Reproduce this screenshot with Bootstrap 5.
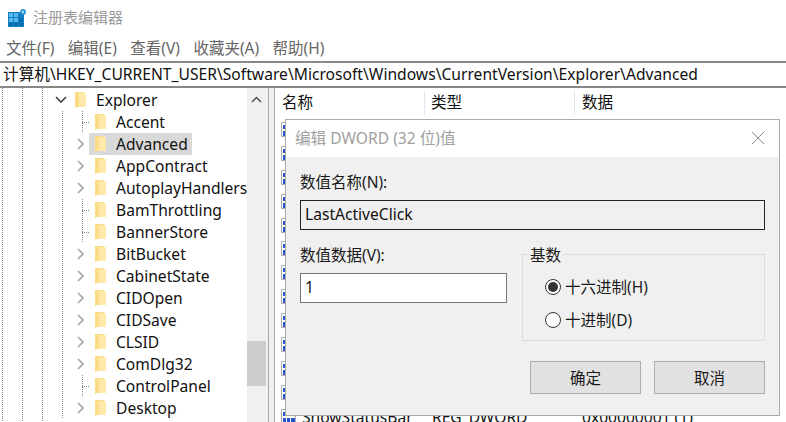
<!doctype html>
<html lang="zh-CN"><head><meta charset="utf-8"><title>注册表编辑器</title>
<link rel="stylesheet" href="https://cdn.jsdelivr.net/npm/bootstrap@5.3.0/dist/css/bootstrap.min.css">
<style>
html,body{height:100%;margin:0}
body{width:786px;height:422px;overflow:hidden;background:#fff;color:#111;font-family:"Noto Sans","Noto Sans CJK SC",sans-serif;font-size:15.6px;line-height:22px}
.shell{position:relative;width:786px;height:422px;overflow:hidden}
.titlebar{height:36px;padding:6px 0 0 8px;color:#999;font-size:15px;gap:6px}
.titlebar svg{margin-top:3px}
.menubar{height:25px;padding-left:6px;gap:13.5px;color:#666;font-size:15.5px;line-height:24px}
.addr{height:27px;border-top:2px solid #888;border-bottom:2px solid #888;padding-left:3px;font-size:15.65px;line-height:23px;white-space:nowrap}
.panes{height:335px;background:#f0f0f0}
.tree{position:relative;width:269px;flex:none;background-color:#fff;border-right:1px solid #a9a9a9;
 background-image:linear-gradient(#888 50%,transparent 50%),linear-gradient(#888 50%,transparent 50%),linear-gradient(#888 50%,transparent 50%);
 background-size:1px 2px;background-repeat:repeat-y;background-position:2px 0,22px 0,42px 0}
.tree-scroll{width:247px;overflow:hidden;padding-top:1px;height:100%;flex:none}
.kids{background-image:linear-gradient(#888 50%,transparent 50%);background-size:1px 2px;background-repeat:repeat-y;background-position:62px 0}
.trow{height:22px;white-space:nowrap}
.lvl1{padding-left:52px}.lvl2{padding-left:72px}
.slot{width:17px;height:22px;flex:none;display:flex;align-items:center;justify-content:center}
.lvl2 .slot{justify-content:flex-start;padding-left:5px}
.stub{background-image:linear-gradient(#888 50%,transparent 50%),repeating-linear-gradient(90deg,#888 0 1px,transparent 1px 2px);background-size:1px 2px,7px 1px;background-repeat:repeat-y,no-repeat;background-position:10px 0,10px 11px}
.node{padding:0 4px 0 5px;height:22px;gap:10px;display:inline-flex;align-items:center}
.node.sel{background:#d9d9d9}
.vbar{width:21px;flex:none;background:#f0f0f0}
.vbar-up{height:22px;padding-right:2px}
.vbar-gap{height:231px}
.vbar-thumb{height:45px;width:19px;background:#cdcdcd}
.list{flex:1;margin-left:5px;border-left:1px solid #a9a9a9;background:#fff;overflow:hidden}
.lhead{height:27px;padding-top:3px}
.lhead>div{padding-left:6px;border-right:1px solid #e5e5e5;height:24px}
.lhead>.c1{padding-left:7px}
.lhead>.c3{padding-left:7px}
.c1{width:150px;flex:none}.c2{width:150px;flex:none}.c3{width:150px;flex:none}
.lrows{padding-left:6px;padding-top:3px}
.lrow{height:23.9px;white-space:nowrap}
.lrow svg{flex:none}
.lname{width:130px;flex:none;margin-left:5px}
.ltype{width:150px;flex:none}
.dlg{position:absolute;left:285px;top:119px;width:495px;height:297px;background:#f0f0f0;border:1px solid #aaa;color:#1a1a1a}
.dlg-title{height:37px;background:#fff;padding:0 14px 1px 9px;color:#a0a0a0;font-size:15.6px}
.dlg-body{padding:14px 14px 0 14px}
.flabel{margin-bottom:7px;line-height:22px;font-size:15.5px}
.name-in.form-control{height:30px;border:1px solid #222;border-radius:0;background:#f0f0f0;padding:0 4px 2px;font-size:15.6px;color:#111;box-shadow:none;font-family:inherit}
.val-in.form-control{height:30px;width:207px;border:1px solid #777;border-radius:0;background:#fff;padding:0 4px 3px;font-size:15.6px;color:#111;box-shadow:none;font-family:inherit}
.form-row{margin-top:14px;gap:15px}
.basefs{position:relative;width:243px;height:87px;margin-top:10px;border:1px solid #dcdcdc;padding:15px 0 0 22px;flex:none}
.basefs legend{float:none;position:absolute;top:-11px;left:6px;width:auto;margin:0;padding:0 1px;background:#f0f0f0;font-size:15.5px;line-height:22px}
.radio-row{height:33px;gap:4px;font-size:15.5px}
.radio-disc{width:16px;height:16px;border-radius:50%;border:1px solid #333;background:#fff;flex:none;display:flex;align-items:center;justify-content:center}
.radio-disc.on::after{content:"";width:10px;height:10px;border-radius:50%;background:#333}
.btnbar{margin-top:20px;gap:13px;justify-content:flex-end}
.btn.wbtn{width:111px;height:33px;border:1px solid #adadad;border-radius:0;background:#e1e1e1;color:#1a1a1a;font-size:15.5px;padding:0;line-height:30px;font-family:inherit}
</style></head><body>
<div class="shell">
<div class="titlebar d-flex align-items-start">
<svg width="19" height="19" viewBox="0 0 19 19"><rect x="0" y="3" width="16" height="15" fill="#0f7fc4"/><g fill="#5cb8ea"><rect x="1" y="4" width="4" height="4"/><rect x="6" y="4" width="4" height="4"/><rect x="1" y="9" width="4" height="4"/><rect x="6" y="9" width="4" height="4"/></g><g fill="#0a6db0"><rect x="11" y="9" width="4" height="4"/><rect x="1" y="14" width="4" height="3"/><rect x="6" y="14" width="4" height="3"/><rect x="11" y="14" width="4" height="3"/></g><circle cx="15" cy="3" r="3" fill="#2c9ad6"/><circle cx="15" cy="3" r="1.1" fill="#d5eefb"/></svg>
<span>注册表编辑器</span></div>
<div class="menubar d-flex"><span>文件(F)</span><span>编辑(E)</span><span>查看(V)</span><span>收藏夹(A)</span><span>帮助(H)</span></div>
<div class="addr">计算机\HKEY_CURRENT_USER\Software\Microsoft\Windows\CurrentVersion\Explorer\Advanced</div>
<div class="panes d-flex">
<div class="tree d-flex">
<div class="tree-scroll">
<div class="trow lvl1 d-flex"><span class="slot"><svg width="12" height="8" viewBox="0 0 12 8"><path d="M1 1l5 5 5-5" fill="none" stroke="#444" stroke-width="1.6"/></svg></span><span class="node"><svg width="12" height="16" viewBox="0 0 12 16"><path d="M1 0h9v15H3l-2 1z" fill="#fbdc84"/><path d="M5 1h7v14H5z" fill="#fde9a9"/></svg><span>Explorer</span></span></div>
<div class="kids" id="kids"></div>
</div>
<div class="vbar"><div class="vbar-up d-flex align-items-center justify-content-center"><svg width="11" height="7" viewBox="0 0 11 7"><path d="M1 6l4.5-4.5L10 6" fill="none" stroke="#505050" stroke-width="1.5"/></svg></div><div class="vbar-gap"></div><div class="vbar-thumb"></div></div>
</div>
<div class="list">
<div class="lhead d-flex"><div class="c1">名称</div><div class="c2">类型</div><div class="c3 border-0">数据</div></div>
<div class="lrows" id="rows"></div>
</div>
</div>
<div class="dlg">
<div class="dlg-title d-flex align-items-center justify-content-between"><span>编辑 DWORD (32 位)值</span><svg width="14" height="14" viewBox="0 0 14 14"><path d="M1 1l12 12M13 1L1 13" stroke="#8a8a8a" stroke-width="1" fill="none"/></svg></div>
<div class="dlg-body">
<div class="flabel">数值名称(N):</div>
<input class="form-control name-in" value="LastActiveClick" readonly>
<div class="form-row d-flex">
<div><div class="flabel">数值数据(V):</div><input class="form-control val-in" value="1"></div>
<fieldset class="basefs"><legend>基数</legend>
<div class="radio-row d-flex align-items-center"><span class="radio-disc on"></span><span>十六进制(H)</span></div>
<div class="radio-row d-flex align-items-center"><span class="radio-disc"></span><span>十进制(D)</span></div>
</fieldset>
</div>
<div class="btnbar d-flex"><button class="btn wbtn">确定</button><button class="btn wbtn">取消</button></div>
</div>
</div>
</div>
<script>
const kids=["Accent","Advanced","AppContract","AutoplayHandlers","BamThrottling","BannerStore","BitBucket","CabinetState","CIDOpen","CIDSave","CLSID","ComDlg32","ControlPanel","Desktop"];
const leaf={Accent:1,ControlPanel:1,BamThrottling:1,BannerStore:1};
const fld='<svg width="12" height="16" viewBox="0 0 12 16"><path d="M1 0h9v15H3l-2 1z" fill="#fbdc84"/><path d="M5 1h7v14H5z" fill="#fde9a9"/></svg>';
const chev='<svg width="8" height="12" viewBox="0 0 8 12"><path d="M1 1l5 5-5 5" fill="none" stroke="#a6a6a6" stroke-width="1.7"/></svg>';
document.getElementById('kids').innerHTML=kids.map(k=>`<div class="trow lvl2 d-flex"><span class="slot ${leaf[k]?'stub':''}">${leaf[k]?'':chev}</span><span class="node ${k=='Advanced'?'sel':''}">${fld}<span>${k}</span></span></div>`).join('');
const ic='<svg width="16" height="16" viewBox="0 0 16 16"><path d="M.5 .5h13l1 1v13H.5z" fill="#fff" stroke="#aaa"/><g fill="#2a55d0"><rect x="2" y="3" width="3" height="4"/><rect x="6" y="3" width="2" height="4"/><rect x="9" y="3" width="3" height="4"/><rect x="2" y="9" width="3" height="5"/><rect x="6" y="9" width="3" height="5"/><rect x="10" y="9" width="4" height="5"/></g></svg>';
let h='';for(let i=0;i<13;i++){h+=`<div class="lrow d-flex align-items-center">${ic}<span class="lname">${i==12?'ShowStatusBar':''}</span>${i==12?'<span class="ltype">REG_DWORD</span><span>0x00000001 (1)</span>':''}</div>`}
document.getElementById('rows').innerHTML=h;
</script>
<script src="https://cdn.jsdelivr.net/npm/bootstrap@5.3.0/dist/js/bootstrap.bundle.min.js"></script>
</body></html>
